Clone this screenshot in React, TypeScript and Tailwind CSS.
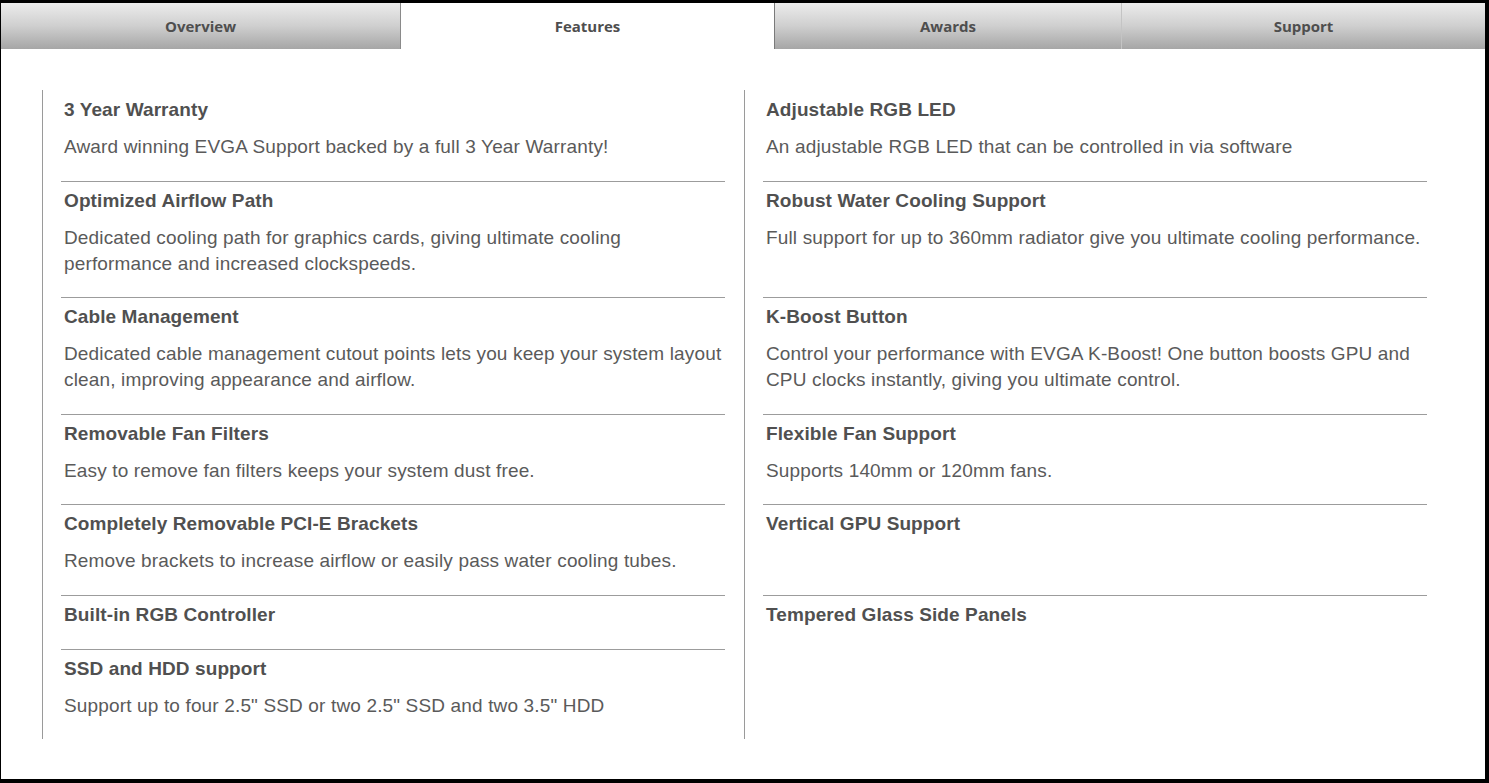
import React from 'react'

type Feature = { title: string; desc?: string }

const tabs = [
  { label: 'Overview', w: 'w-[400px]', active: false, edge: 'border-r border-[#8a8a8a]' },
  { label: 'Features', w: 'w-[373px]', active: true, edge: '' },
  { label: 'Awards', w: 'w-[347px]', active: false, edge: 'border-l border-[#7a7a7a]' },
  { label: 'Support', w: 'flex-1', active: false, edge: 'border-l border-[#c4c4c4]' },
]

// rows are laid out in pairs so both columns share row heights
const rows: [Feature, Feature | null][] = [
  [
    { title: '3 Year Warranty', desc: 'Award winning EVGA Support backed by a full 3 Year Warranty!' },
    { title: 'Adjustable RGB LED', desc: 'An adjustable RGB LED that can be controlled in via software' },
  ],
  [
    {
      title: 'Optimized Airflow Path',
      desc: 'Dedicated cooling path for graphics cards, giving ultimate cooling performance and increased clockspeeds.',
    },
    {
      title: 'Robust Water Cooling Support',
      desc: 'Full support for up to 360mm radiator give you ultimate cooling performance.',
    },
  ],
  [
    {
      title: 'Cable Management',
      desc: 'Dedicated cable management cutout points lets you keep your system layout clean, improving appearance and airflow.',
    },
    {
      title: 'K-Boost Button',
      desc: 'Control your performance with EVGA K-Boost! One button boosts GPU and CPU clocks instantly, giving you ultimate control.',
    },
  ],
  [
    { title: 'Removable Fan Filters', desc: 'Easy to remove fan filters keeps your system dust free.' },
    { title: 'Flexible Fan Support', desc: 'Supports 140mm or 120mm fans.' },
  ],
  [
    {
      title: 'Completely Removable PCI-E Brackets',
      desc: 'Remove brackets to increase airflow or easily pass water cooling tubes.',
    },
    { title: 'Vertical GPU Support' },
  ],
  [{ title: 'Built-in RGB Controller' }, { title: 'Tempered Glass Side Panels' }],
  [
    { title: 'SSD and HDD support', desc: 'Support up to four 2.5" SSD or two 2.5" SSD and two 3.5" HDD' },
    null,
  ],
]

function Cell({ item, first }: { item: Feature | null; first: boolean }) {
  return (
    <div className="border-l border-[#9a9a9a] pl-[18px] pr-[19px]">
      {item && (
        <div
          className={
            'border-t pt-[6px] ' +
            (item.desc ? 'pb-[20.5px] ' : 'pb-[21px] ') +
            (first ? 'border-transparent' : 'border-[#9c9c9c]')
          }
        >
          <h3 className="pl-[3px] text-[19px] leading-[26px] tracking-[0.1px] font-bold text-[#505050]">
            {item.title}
          </h3>
          {item.desc && (
            <p className="mt-[11px] pl-[3px] text-[19px] leading-[26px] tracking-[0.15px] text-[#5a5a5a]">
              {item.desc}
            </p>
          )}
        </div>
      )}
    </div>
  )
}

export default function App() {
  return (
    <div className="h-[783px] bg-black pt-[3px] pl-px pr-[4px] pb-[4px] font-['Liberation_Sans',Arial,sans-serif]">
      <div className="h-full bg-white flex flex-col">
        {/* Tabs */}
        <div className="flex h-[46px] shrink-0">
          {tabs.map((t) => (
            <div
              key={t.label}
              className={
                t.w +
                ' ' +
                t.edge +
                ' flex items-center justify-center font-["Open_Sans",sans-serif] text-[15px] font-bold text-[#4e4e4e] ' +
                (t.active ? 'bg-white' : 'bg-linear-to-b from-[#ececec] via-[#cfcfcf] to-[#a6a6a6]')
              }
            >
              {t.label}
            </div>
          ))}
        </div>

        {/* Feature list */}
        <div className="pl-[41px] pt-[41px]">
          <div className="grid grid-cols-[702px_702px]">
            {rows.map(([left, right], i) => (
              <React.Fragment key={i}>
                <Cell item={left} first={i === 0} />
                <Cell item={right} first={i === 0} />
              </React.Fragment>
            ))}
          </div>
        </div>
      </div>
    </div>
  )
}
